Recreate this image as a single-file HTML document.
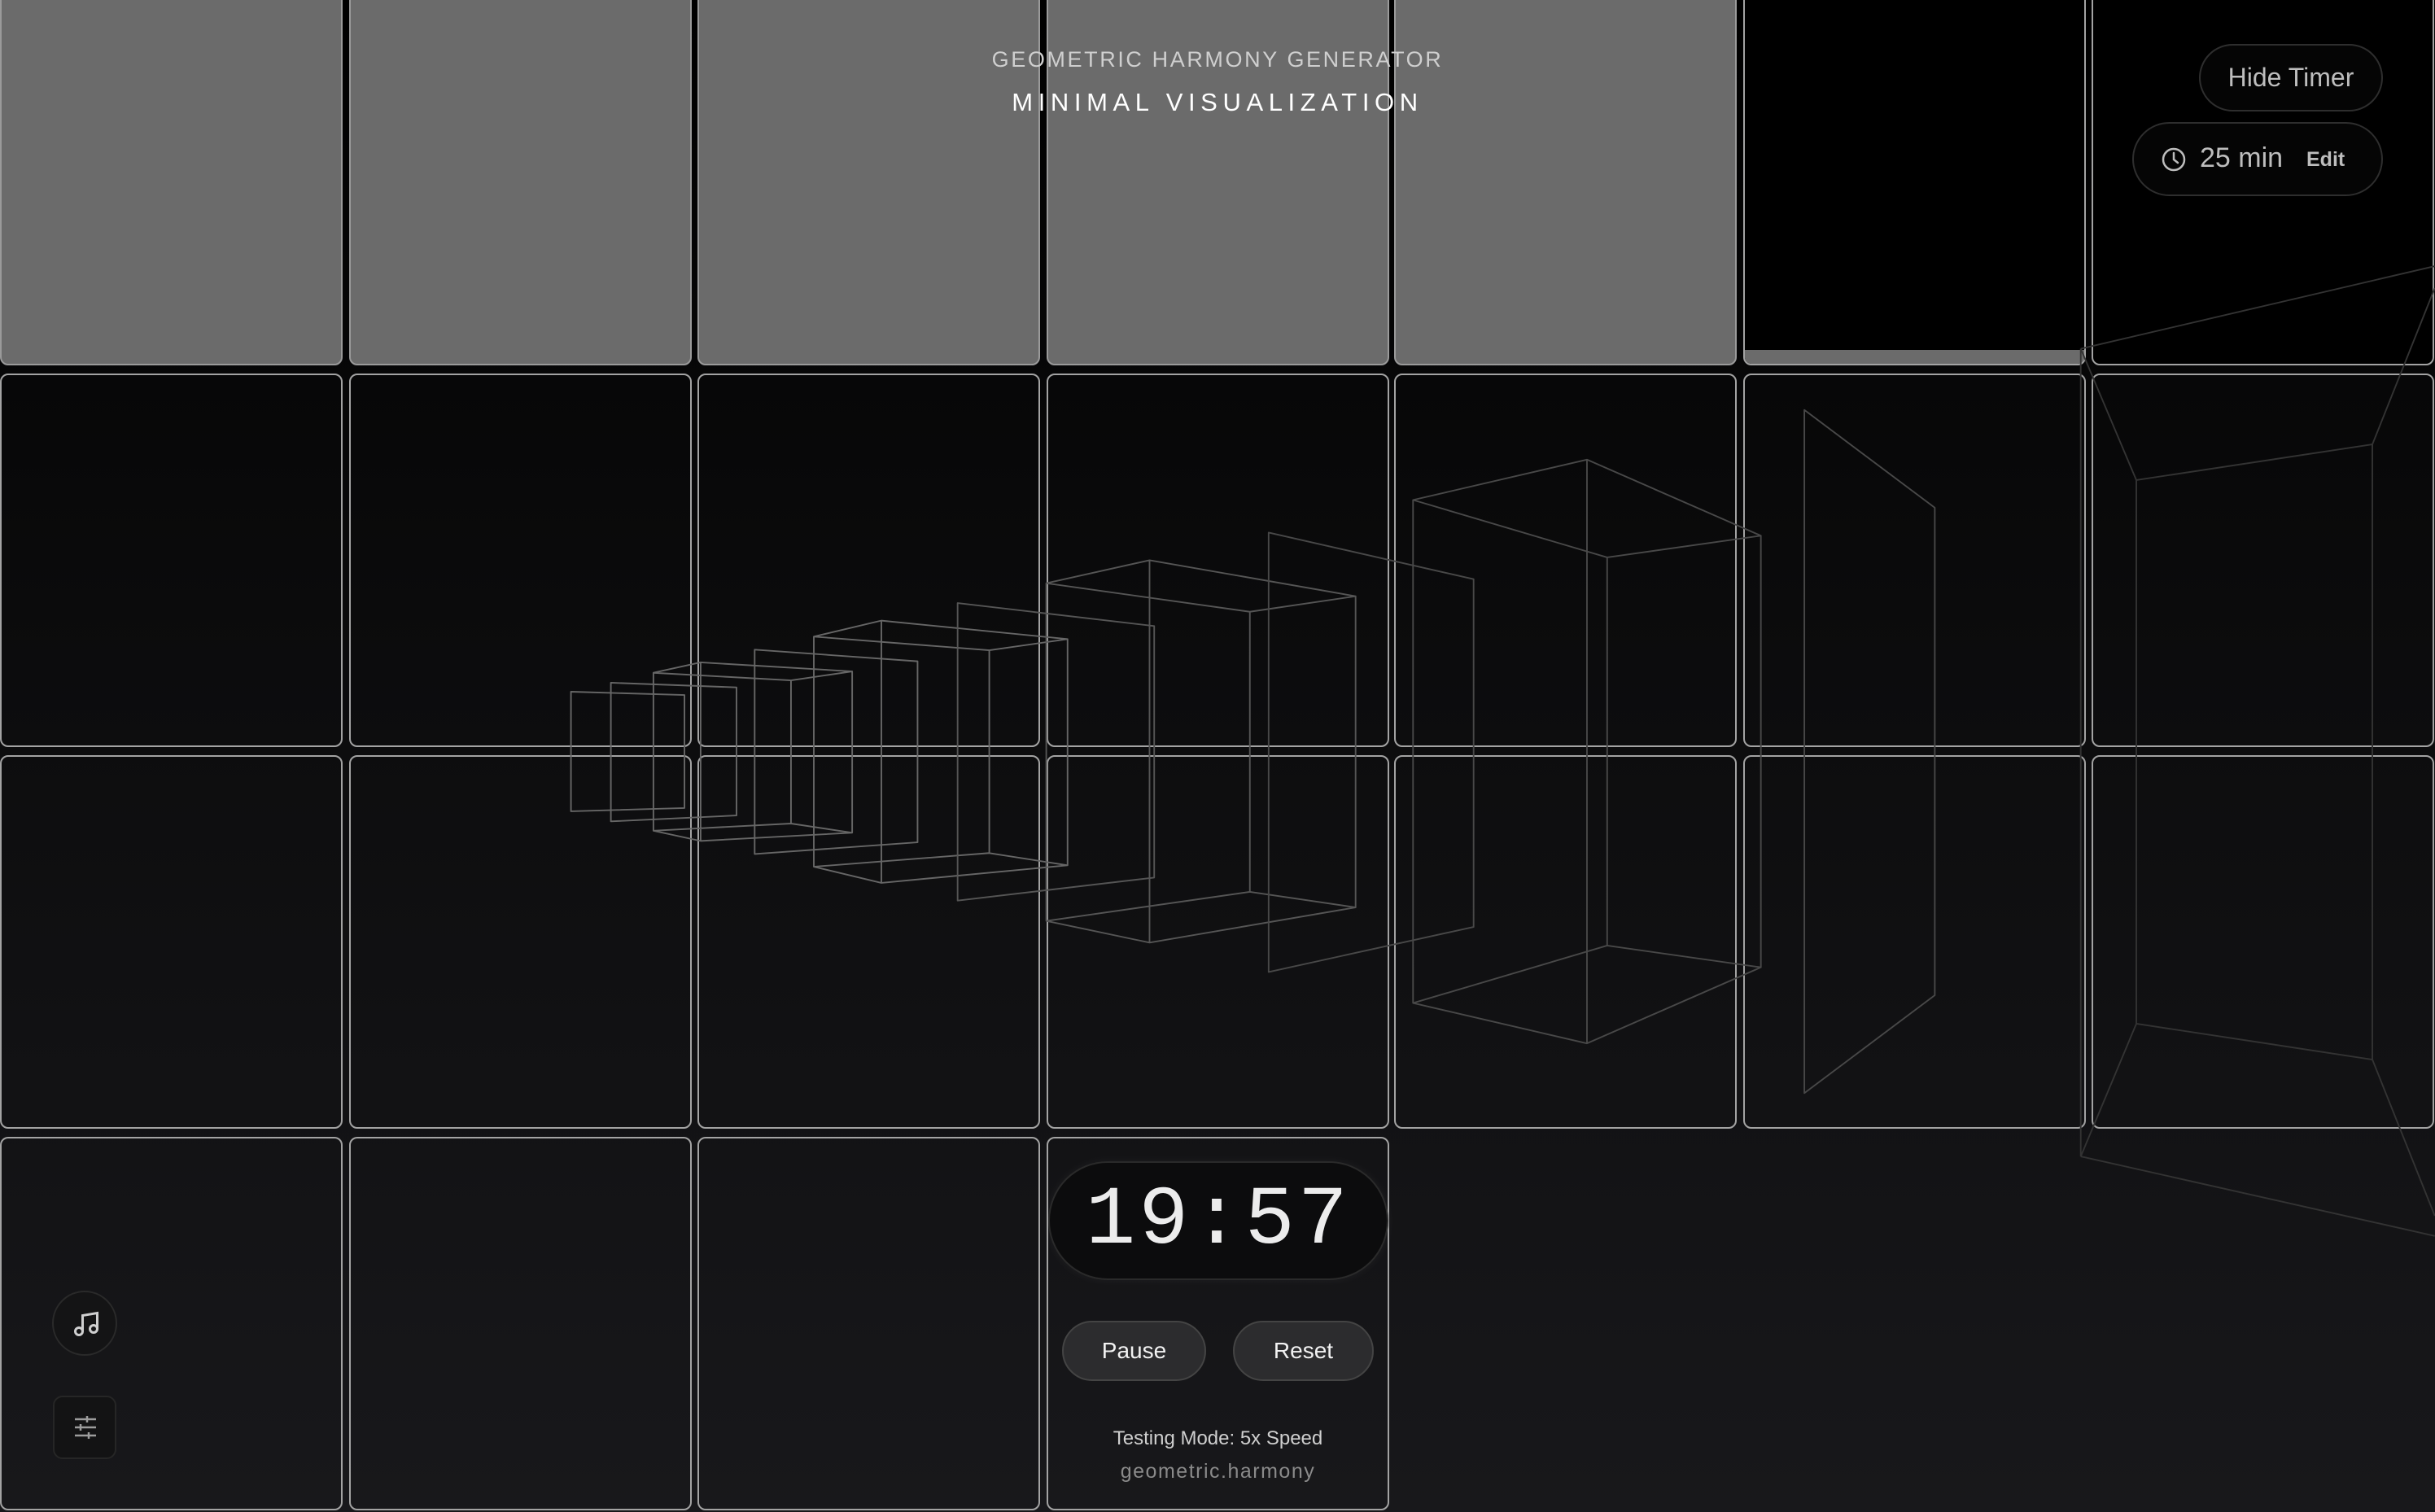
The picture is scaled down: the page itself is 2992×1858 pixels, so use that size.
<!DOCTYPE html>
<html><head><meta charset="utf-8"><style>
*{margin:0;padding:0;box-sizing:border-box}
html,body{width:2992px;height:1858px;overflow:hidden}
body{background:linear-gradient(180deg,#000 0%,#0b0b0c 40%,#18181b 100%);font-family:"Liberation Sans",sans-serif;position:relative}
.c{position:absolute;width:421px;height:459px;border:2.5px solid #a3a3a3;border-radius:10px}
.g{background:#6b6b6b;border-color:#9a9a9a}
.k{background:#000}
svg{position:absolute;left:0;top:0}
.t1{position:absolute;top:58px;left:0;width:2992px;text-align:center;color:#cfcfcf;font-size:27px;letter-spacing:2.6px}
.t2{position:absolute;top:108px;left:0;width:2992px;text-align:center;color:#fff;font-size:31px;letter-spacing:6.6px}
.pill{position:absolute;border:2px solid #2e2e2e;border-radius:50px;color:#bdbdbd;background:#050505}
.btn{position:absolute;top:1623px;height:74px;border:2px solid #444;border-radius:40px;background:#2c2c2e;color:#f2f2f2;font-size:28px;text-align:center;line-height:70px}
</style></head><body>
<div class="c g" style="left:0px;top:-10px"></div>
<div class="c g" style="left:429px;top:-10px"></div>
<div class="c g" style="left:857px;top:-10px"></div>
<div class="c g" style="left:1286px;top:-10px"></div>
<div class="c g" style="left:1713px;top:-10px"></div>
<div class="c k" style="left:2142px;top:-10px;overflow:hidden"><div style="position:absolute;left:0;right:0;bottom:0;height:17px;background:#6b6b6b"></div></div>
<div class="c k" style="left:2570px;top:-10px"></div>

<div class="c" style="left:0px;top:459px"></div>
<div class="c" style="left:429px;top:459px"></div>
<div class="c" style="left:857px;top:459px"></div>
<div class="c" style="left:1286px;top:459px"></div>
<div class="c" style="left:1713px;top:459px"></div>
<div class="c" style="left:2142px;top:459px"></div>
<div class="c" style="left:2570px;top:459px"></div>

<div class="c" style="left:0px;top:928px"></div>
<div class="c" style="left:429px;top:928px"></div>
<div class="c" style="left:857px;top:928px"></div>
<div class="c" style="left:1286px;top:928px"></div>
<div class="c" style="left:1713px;top:928px"></div>
<div class="c" style="left:2142px;top:928px"></div>
<div class="c" style="left:2570px;top:928px"></div>

<div class="c" style="left:0px;top:1397px"></div>
<div class="c" style="left:429px;top:1397px"></div>
<div class="c" style="left:857px;top:1397px"></div>
<div class="c" style="left:1286px;top:1397px"></div>

<svg width="2992" height="1858" viewBox="0 0 2992 1858">
<g transform="scale(1.908)" fill="none" stroke-width="1" stroke-linejoin="round">
<g stroke="#666">
<path d="M367.7,445.5L440.8,447.6L440.8,520.4L367.7,522.5Z"/>
<path d="M393.4,439.7L474.3,442.7L474.3,525.2L393.4,529Z"/>
<path d="M420.8,433.3L451.2,426.6L548.8,432.4L509.4,438.2Z M420.8,535L451.2,541.6L548.8,536.3L509.4,530.4Z M420.8,433.3V535 M451.2,426.6V541.6 M509.4,438.2V530.4 M548.8,432.4V536.3"/>
<path d="M486,418.4L590.9,425.9L590.9,542.5L486,550Z"/>
<path d="M524.1,410L567.6,399.7L687.5,411.6L637.1,418.8Z M524.1,558.2L567.6,568.6L687.5,557.3L637.1,549.4Z M524.1,410V558.2 M567.6,399.7V568.6 M637.1,418.8V549.4 M687.5,411.6V557.3"/>
</g>
<g stroke="#555">
<path d="M616.7,388.4L743.3,403.2L743.3,565.2L616.7,580Z"/>
<path d="M673.8,375.6L740.3,360.8L873,384L804.9,394Z M673.8,593.1L740.3,607.1L873,584.4L804.9,574.4Z M673.8,375.6V593.1 M740.3,360.8V607.1 M804.9,394V574.4 M873,384V584.4"/>
</g>
<g stroke="#484848">
<path d="M817,343L949,373L949,597L817,626Z"/>
<path d="M910,322L1022,296L1134,345L1035,359Z M910,646L1022,672L1134,623L1035,609Z M910,322V646 M1022,296V672 M1035,359V609 M1134,345V623"/>
<path d="M1162,264L1246,327L1246,641L1162,704Z"/>
</g>
<g stroke="#333">
<path d="M1375.8,309.2L1527.8,286.2L1527.8,682.4L1375.8,659.3Z"/>
<path d="M1340,224.6L1568,171.4 M1340,744.8L1568,796 M1340,224.6V744.8 M1340,224.6L1375.8,309.2 M1340,744.8L1375.8,659.3 M1527.8,286.2L1568,185.5 M1527.8,682.4L1568,783"/>
</g>
</g></svg>

<div class="t1">GEOMETRIC HARMONY GENERATOR</div>
<div class="t2">MINIMAL VISUALIZATION</div>

<div class="pill" style="left:2702px;top:54px;width:226px;height:83px;font-size:32px;line-height:79px;text-align:center">Hide Timer</div>
<div class="pill" style="left:2620px;top:150px;width:308px;height:91px">
<svg width="32" height="32" viewBox="0 0 32 32" style="left:33px;top:28px"><circle cx="16" cy="16" r="13" fill="none" stroke="#bdbdbd" stroke-width="2.5"/><path d="M16 8V16L21 20" fill="none" stroke="#bdbdbd" stroke-width="2.5" stroke-linecap="round"/></svg>
<span style="position:absolute;left:81px;top:23px;font-size:34px">25 min</span>
<span style="position:absolute;left:212px;top:30px;font-size:25px;font-weight:bold">Edit</span>
</div>

<div style="position:absolute;left:1288px;top:1427px;width:418px;height:146px;border:2px solid #2a2a2a;border-radius:75px;background:#0c0c0d;box-shadow:0 0 12px rgba(255,255,255,0.05)"></div>
<div style="position:absolute;left:1288px;top:1440px;width:418px;text-align:center;color:#ececec;font-family:'Liberation Mono',monospace;font-size:102px;line-height:120px;letter-spacing:4px">19:57</div>
<div class="btn" style="left:1305px;width:177px">Pause</div>
<div class="btn" style="left:1515px;width:173px">Reset</div>
<div style="position:absolute;left:1286px;top:1754px;width:421px;text-align:center;color:#cfcfcf;font-size:24px">Testing Mode: 5x Speed</div>
<div style="position:absolute;left:1286px;top:1794px;width:421px;text-align:center;color:#8a8a8a;font-size:25px;letter-spacing:1.5px">geometric.harmony</div>

<div style="position:absolute;left:64px;top:1586px;width:80px;height:80px;border-radius:50%;border:2px solid #2a2a2a;background:#141415">
<svg width="36" height="36" viewBox="0 0 24 24" style="left:22px;top:21px"><path d="M9 18V5l12-2v13" fill="none" stroke="#cfcfcf" stroke-width="2"/><circle cx="6" cy="18" r="3" fill="none" stroke="#cfcfcf" stroke-width="2"/><circle cx="18" cy="16" r="3" fill="none" stroke="#cfcfcf" stroke-width="2"/></svg>
</div>
<div style="position:absolute;left:65px;top:1715px;width:78px;height:78px;border-radius:12px;border:2px solid #262626;background:#131314">
<svg width="30" height="30" viewBox="0 0 30 30" style="left:23px;top:22px"><g stroke="#9c9c9c" stroke-width="2.5"><path d="M2 5H28M2 15H28M2 25H28"/><path d="M17 1V9M9 11V19M19 21V29"/></g></svg>
</div>
</body></html>
